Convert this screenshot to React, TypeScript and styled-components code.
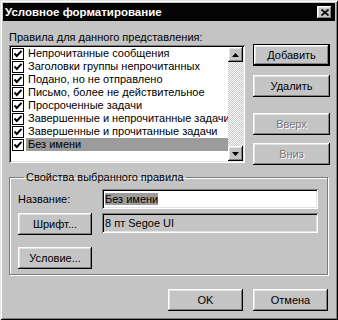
import React from "react";
import styled, { createGlobalStyle, css } from "styled-components";

const Global = createGlobalStyle`
  html, body { margin: 0; padding: 0; background: #c4c4c4; }
  body { font-family: "Liberation Sans", Arial, sans-serif; font-size: 11px; color: #000; }
  * { box-sizing: border-box; }
`;

const raised = css`
  box-shadow: inset -1px -1px #000, inset 1px 1px #fff, inset -2px -2px #808080, inset 2px 2px #e4e4e4;
`;
const sunken = css`
  box-shadow: inset 1px 1px #808080, inset -1px -1px #fff, inset 2px 2px #000, inset -2px -2px #e4e4e4;
`;

const Window = styled.div`
  width: 338px;
  height: 320px;
  background: #c4c4c4;
  padding: 3px;
  display: flex;
  flex-direction: column;
  box-shadow: inset 1px 1px #e4e4e4, inset -1px -1px #000, inset 2px 2px #fff, inset -2px -2px #808080;
`;

const TitleBar = styled.div`
  height: 18px;
  background: #050505;
  display: flex;
  align-items: center;
  justify-content: space-between;
  padding: 0 3px 0 2px;
`;

const Title = styled.span`
  color: #fff;
  font-weight: bold;
  font-size: 11.5px;
`;

const CloseButton = styled.div`
  width: 15px;
  height: 13px;
  background: #c4c4c4;
  display: flex;
  align-items: center;
  justify-content: center;
  ${raised};
`;

const Content = styled.div`
  flex: 1;
  display: flex;
  flex-direction: column;
  padding: 9px 6px 0 6px;
`;

const TopRow = styled.div`
  display: flex;
  gap: 8px;
`;

const ListColumn = styled.div`
  width: 236px;
  display: flex;
  flex-direction: column;
`;

const Label = styled.div<{ $w?: number }>`
  height: 14px;
  line-height: 14px;
  white-space: nowrap;
  ${(p) => (p.$w ? `width: ${p.$w}px; flex-shrink: 0;` : "")}
`;

const ListBox = styled.div`
  margin-top: 1px;
  height: 118px;
  background: #fff;
  padding: 2px;
  display: flex;
  ${sunken};
`;

const Rows = styled.div`
  flex: 1;
  min-width: 0;
  overflow: hidden;
  display: flex;
  flex-direction: column;
`;

const Row = styled.div`
  height: 13px;
  display: flex;
  align-items: center;
  white-space: nowrap;
`;

const CheckWrap = styled.div`
  width: 15px;
  height: 13px;
  display: flex;
  align-items: center;
  padding-left: 1px;
  flex-shrink: 0;
`;

const RowText = styled.span<{ $selected?: boolean }>`
  flex: 1;
  height: 13px;
  line-height: 13px;
  padding-left: 2px;
  overflow: hidden;
  background: ${(p) => (p.$selected ? "#9c9c9c" : "transparent")};
`;

const ScrollBar = styled.div`
  width: 15px;
  flex-shrink: 0;
  display: flex;
  flex-direction: column;
`;

const ScrollButton = styled.div`
  width: 15px;
  height: 15px;
  background: #c4c4c4;
  display: flex;
  align-items: center;
  justify-content: center;
  ${raised};
`;

const ScrollTrack = styled.div`
  flex: 1;
  background: repeating-conic-gradient(#c4c4c4 0 25%, #fff 0 50%) 0 0 / 2px 2px;
`;

const ButtonColumn = styled.div`
  width: 77px;
  display: flex;
  flex-direction: column;
  padding-top: 14px;
`;

const Button = styled.div<{ $w?: number; $mt?: number; $default?: boolean; $disabled?: boolean }>`
  width: ${(p) => p.$w ?? 77}px;
  height: 22px;
  margin-top: ${(p) => p.$mt ?? 0}px;
  flex-shrink: 0;
  background: #c4c4c4;
  display: flex;
  align-items: center;
  justify-content: center;
  white-space: nowrap;
  color: ${(p) => (p.$disabled ? "#7a7a7a" : "#000")};
  text-shadow: ${(p) => (p.$disabled ? "1px 1px 0 #fff" : "none")};
  ${(p) =>
    p.$default
      ? css`
          box-shadow: inset 1px 1px #000, inset -1px -1px #000, inset -2px -2px #000, inset 2px 2px #fff,
            inset -3px -3px #808080, inset 3px 3px #e4e4e4;
        `
      : raised};
`;

const GroupBox = styled.fieldset`
  margin: 5px 1px 0 0;
  padding: 5px 9px 5px 8px;
  border: 1px solid #7c7c7c;
  box-shadow: 1px 1px 0 #fff, inset 1px 1px 0 #fff;
  min-width: 0;
  display: flex;
  flex-direction: column;
`;

const Legend = styled.legend`
  padding: 0 2px;
  margin-left: 6px;
  line-height: 14px;
  height: 14px;
`;

const PropRow = styled.div<{ $mt?: number }>`
  display: flex;
  align-items: center;
  margin-top: ${(p) => p.$mt ?? 0}px;
`;

const Field = styled.div<{ $readOnly?: boolean }>`
  width: 217px;
  height: 20px;
  align-self: flex-start;
  margin-left: ${(p) => (p.$readOnly ? 10 : 0)}px;
  padding: 3px 4px 0 3px;
  line-height: 14px;
  white-space: nowrap;
  background: ${(p) => (p.$readOnly ? "#c4c4c4" : "#fff")};
  ${sunken};
`;

const Selected = styled.span`
  background: #9c9c9c;
`;

const Footer = styled.div`
  display: flex;
  justify-content: flex-end;
  gap: 10px;
  margin-top: 14px;
  padding-right: 1px;
`;

const Check = () => (
  <svg width="12" height="12" viewBox="0 0 12 12">
    <rect x="0.5" y="0.5" width="11" height="11" fill="#fff" stroke="#000" />
    <polyline points="2.5,5.5 4.8,8 9.5,2.8" fill="none" stroke="#000" strokeWidth="2" />
  </svg>
);

const Arrow = ({ up }: { up?: boolean }) => (
  <svg width="7" height="4" viewBox="0 0 7 4">
    <polygon points={up ? "0,4 7,4 3.5,0" : "0,0 7,0 3.5,4"} fill="#000" />
  </svg>
);

const items = [
  "Непрочитанные сообщения",
  "Заголовки группы непрочитанных",
  "Подано, но не отправлено",
  "Письмо, более не действительное",
  "Просроченные задачи",
  "Завершенные и непрочитанные задачи",
  "Завершенные и прочитанные задачи",
  "Без имени",
];

export default function App() {
  return (
    <>
      <Global />
      <Window>
        <TitleBar>
          <Title>Условное форматирование</Title>
          <CloseButton>
            <svg width="8" height="7" viewBox="0 0 8 7">
              <path d="M0.5 0.5 L7.5 6.5 M7.5 0.5 L0.5 6.5" stroke="#000" strokeWidth="1.6" />
            </svg>
          </CloseButton>
        </TitleBar>
        <Content>
          <TopRow>
            <ListColumn>
              <Label>Правила для данного представления:</Label>
              <ListBox>
                <Rows>
                  {items.map((t, i) => (
                    <Row key={t}>
                      <CheckWrap>
                        <Check />
                      </CheckWrap>
                      <RowText $selected={i === items.length - 1}>{t}</RowText>
                    </Row>
                  ))}
                </Rows>
                <ScrollBar>
                  <ScrollButton>
                    <Arrow up />
                  </ScrollButton>
                  <ScrollTrack />
                  <ScrollButton>
                    <Arrow />
                  </ScrollButton>
                </ScrollBar>
              </ListBox>
            </ListColumn>
            <ButtonColumn>
              <Button $default>Добавить</Button>
              <Button $mt={9}>Удалить</Button>
              <Button $mt={16} $disabled>
                Вверх
              </Button>
              <Button $mt={8} $disabled>
                Вниз
              </Button>
            </ButtonColumn>
          </TopRow>
          <GroupBox>
            <Legend>Свойства выбранного правила</Legend>
            <PropRow>
              <Label $w={84}>Название:</Label>
              <Field>
                <Selected>Без имени</Selected>
              </Field>
            </PropRow>
            <PropRow $mt={4}>
              <Button $w={74}>Шрифт...</Button>
              <Field $readOnly>8 пт Segoe UI</Field>
            </PropRow>
            <PropRow $mt={12}>
              <Button $w={74}>Условие...</Button>
            </PropRow>
          </GroupBox>
          <Footer>
            <Button $w={75}>OK</Button>
            <Button $w={75}>Отмена</Button>
          </Footer>
        </Content>
      </Window>
    </>
  );
}
